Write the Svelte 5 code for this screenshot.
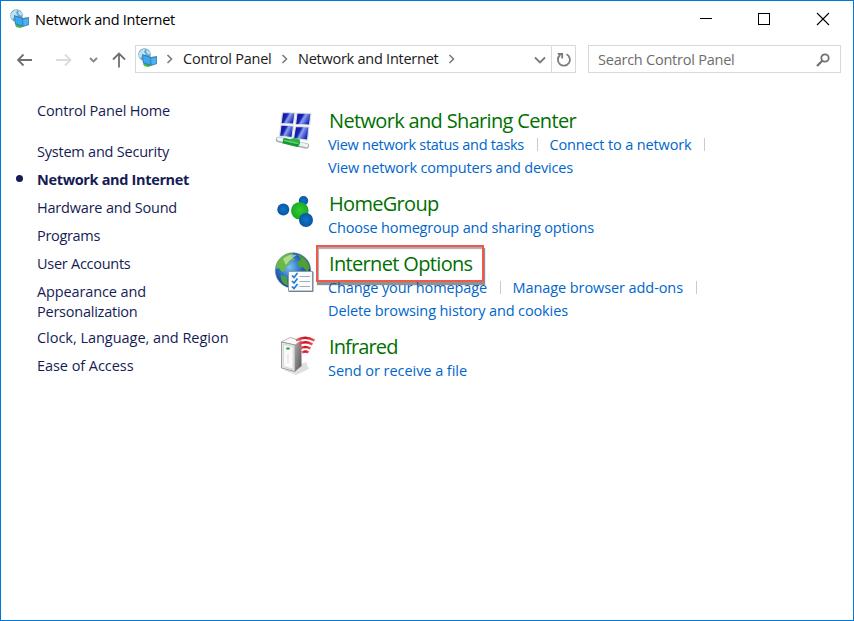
<script>
  // Tightens or loosens a label's tracking so that it fills its measured width.
  function fit(node, width) {
    const range = document.createRange();
    range.selectNodeContents(node);
    const natural = range.getBoundingClientRect().width;
    node.style.letterSpacing = `${(width - natural) / node.textContent.trim().length}px`;
  }

  const sidebar = [
    { lines: [['System and Security', 132]] },
    { lines: [['Network and Internet', 152]], current: true },
    { lines: [['Hardware and Sound', 140]] },
    { lines: [['Programs', 63]] },
    { lines: [['User Accounts', 93.5]] },
    { lines: [['Appearance and', 109], ['Personalization', 100.5]] },
    { lines: [['Clock, Language, and Region', 191.5]] },
    { lines: [['Ease of Access', 96.5]] },
  ];

  const groups = [
    {
      icon: 'center', title: ['Network and Sharing Center', 247],
      rows: [
        [['View network status and tasks', 196], ['Connect to a network', 142]],
        [['View network computers and devices', 245]],
      ],
      trailing: true,
    },
    { icon: 'home', title: ['HomeGroup', 109.5], rows: [[['Choose homegroup and sharing options', 266]]] },
    {
      icon: 'globe', title: ['Internet Options', 143.5], marked: true,
      rows: [
        [['Change your homepage', 159], ['Manage browser add-ons', 170.5]],
        [['Delete browsing history and cookies', 240]],
      ],
      trailing: true,
    },
    { icon: 'infrared', title: ['Infrared', 68.5], rows: [[['Send or receive a file', 139]]] },
  ];
</script>

{#snippet netIcon()}
  <svg class="net" width="20" height="20" viewBox="0 0 20 20">
    <circle cx="6.5" cy="6.5" r="6.3" fill="#62a6cc" />
    <path d="M1 5Q3.5 .8 7.5 .8L6 4L8 6.5L4.5 7.5L2.5 10.5Q-.5 8 1 5M8.5 1L12 4L11.5 7L8.5 5Z" fill="#bfe0ee" />
    <path d="M5 16L9 15.5L13.5 17.5L10.5 19L6.5 18.3Z" fill="#42bd3f" />
    <path d="M11 9.2L19 8V16L13 18Z" fill="#4a83a8" />
    <path d="M13 10.6L18.2 9.4V15.2L13.6 16.7Z" fill="#47b4f8" />
    <path d="M4 6L13 9V17.8L5 15.5Z" fill="#3f7ca4" />
    <path d="M5 7.4L12.2 9.8V16.6L5.8 14.6Z" fill="#38a9f5" />
  </svg>
{/snippet}

{#snippet chevron()}
  <svg class="chev" width="8" height="10" viewBox="0 0 8 10"><path d="M1.5 1L5.5 5L1.5 9" /></svg>
{/snippet}

{#snippet groupIcon(kind)}
  <svg width="42" height="44" viewBox="0 0 42 44">
    <defs>
      <linearGradient id="screen" x1="0" y1="0" x2="1" y2=".45">
        <stop offset="0" stop-color="#0b129c" /><stop offset=".45" stop-color="#1622b5" />
        <stop offset=".6" stop-color="#8ca0ee" /><stop offset="1" stop-color="#1225b4" />
      </linearGradient>
      <radialGradient id="blue"><stop offset="0" stop-color="#1273c6" /><stop offset="1" stop-color="#0757a4" /></radialGradient>
      <radialGradient id="green" cx=".5" cy=".45"><stop offset="0" stop-color="#34c936" /><stop offset="1" stop-color="#18aa20" /></radialGradient>
      <radialGradient id="sea" cx=".4" cy=".4" r=".62">
        <stop offset="0" stop-color="#7cc4f6" /><stop offset=".5" stop-color="#2c70c8" /><stop offset="1" stop-color="#152d78" />
      </radialGradient>
      <linearGradient id="side" x1="0" y1="0" x2="1" y2="1">
        <stop offset="0" stop-color="#aaa" /><stop offset="1" stop-color="#555" />
      </linearGradient>
      <linearGradient id="wave" x1="0" y1="0" x2="1" y2="0">
        <stop offset="0" stop-color="#ee6570" /><stop offset=".5" stop-color="#c40f22" /><stop offset="1" stop-color="#ef5a59" />
      </linearGradient>
    </defs>
    {#if kind === 'center'}
      <g stroke="#dcdee3" stroke-width="1.2" fill="url(#screen)">
        <path d="M8.5 4.5L21 5L19.5 16L7 15.5Z" /><path d="M23 5L37 5.5L35.5 17L21.5 16.5Z" />
        <path d="M7 17L19.5 18L18 29.5L5.5 28Z" /><path d="M21.5 18.5L35 19L33.5 32L19.5 30.5Z" />
      </g>
      <path d="M4.5 31.5L32.5 38" stroke="#a5b0b3" stroke-width="5.4" stroke-linecap="round" />
      <path d="M4.5 31L32.5 37.5" stroke="#edf2f2" stroke-width="3.4" stroke-linecap="round" />
      <path d="M9 32.5L25 36.5" stroke="#159832" stroke-width="5.5" />
      <path d="M15 32Q21 28 26 32L26 36.5L15 34.5Z" fill="#2db447" />
      <path d="M10 32.3L24 35.6" stroke="#60cf73" stroke-width="1.4" />
    {:else if kind === 'home'}
      <circle cx="29.5" cy="9.8" r="4.7" fill="url(#blue)" />
      <circle cx="9.3" cy="18.5" r="6" fill="url(#blue)" />
      <circle cx="25.8" cy="19.8" r="8.8" fill="url(#green)" />
      <circle cx="32" cy="29" r="7" fill="url(#blue)" />
    {:else if kind === 'globe'}
      <circle cx="19" cy="19.5" r="17.7" fill="url(#sea)" stroke="#6c8baa" stroke-width=".6" />
      <path d="M4 10Q10 2 19 2L17 6L21 8L18 10L15 10L16 13L11 16L12 19L8 21L5 17L2 18Q2 13 4 10Z" fill="#69b943" />
      <path d="M23 3Q33 6 36 17L33 21L29 16L26 17L23 12L27 8Z" fill="#4f9f35" />
      <path d="M7 24L13 26L14 35L10 33Q6 29 7 24Z" fill="#4c9f42" />
      <path d="M9 8Q15 2 23 4Q16 8 12 14Z" fill="#d4edbb" opacity=".65" />
      <rect x="14.5" y="20.5" width="24" height="19.5" fill="#fafbfd" stroke="#919ba8" />
      <path d="M15 40.5H39V21" stroke="#777f88" fill="none" />
      <path d="M18 24.5L20 26.5L23.5 22M18 30L20 32L23.5 27.5M18 35.5L20 37.5L23.5 33" fill="none" stroke="#1c7fd3" stroke-width="1.7" />
      <path d="M25.5 25.5H36M25.5 30.5H36M25.5 35.5H36" stroke="#a4abb5" />
    {:else}
      <path d="M10 36L22 41L35 35L32 28Z" fill="#ccc" opacity=".6" />
      <path d="M7.5 8L16 3.5L27 6.5L21 11Z" fill="#fafafa" stroke="#999" stroke-width=".7" />
      <path d="M7.5 8L21 11V37.5L7.5 34Z" fill="#e8e8e8" stroke="#888" stroke-width=".8" />
      <path d="M9.5 10.5L19 12.5V35L9.5 32.5Z" fill="#fafafa" stroke="#c4c4c4" stroke-width=".6" />
      <path d="M21 11L27.5 6.5V32L21 37.5Z" fill="url(#side)" />
      <ellipse cx="14" cy="14.5" rx="2" ry="1.3" fill="#40aa48" />
      <path d="M14 20V29" stroke="#ddd" />
      <g fill="none" stroke="url(#wave)" stroke-width="2.5">
        <path d="M22 6.5Q31 1 40.5 6.5" /><path d="M24 10.5Q31.5 6 38.5 10.5" />
        <path d="M26 14.5Q31.5 11.5 36.5 14.5" /><path d="M28 18.5Q31.5 16.5 34.5 18.5" />
      </g>
    {/if}
  </svg>
{/snippet}

<div class="window">
  <header class="titlebar">
    {@render netIcon()}
    <span class="title"><span use:fit={140}>Network and Internet</span></span>
    <svg class="controls" width="138" height="16" viewBox="0 0 138 16" shape-rendering="crispEdges">
      <path d="M7 6.5H19" stroke="#000" />
      <rect x="65.5" y="1.5" width="11" height="11" fill="none" stroke="#000" />
      <path d="M124 1L136 13M136 1L124 13" stroke="#000" shape-rendering="auto" stroke-width="1.1" />
    </svg>
  </header>

  <nav class="toolbar">
    <svg class="arrows" width="118" height="20" viewBox="0 0 118 20" fill="none" stroke-width="1.8">
      <path d="M31 11H17M22.5 5.5L17 11L22.5 16.5" stroke="#707070" />
      <path d="M55 11H69M64 5.5L69.5 11L64 16.5" stroke="#dcdcdc" />
      <path d="M89 9L92.5 12.5L96 9" stroke="#858585" />
      <path d="M118 18.5V5M112 10.5L118 4.5L124 10.5" stroke="#707070" />
    </svg>
    <div class="address">
      {@render netIcon()}
      {@render chevron()}
      <span use:fit={88.5}>Control Panel</span>
      {@render chevron()}
      <span use:fit={140.5}>Network and Internet</span>
      {@render chevron()}
      <svg class="drop" width="12" height="8" viewBox="0 0 12 8"><path d="M1 1.5L6 6.5L11 1.5" fill="none" stroke="#7b7b7b" stroke-width="1.8" /></svg>
      <span class="refresh">
        <svg width="16" height="16" viewBox="0 0 16 16" fill="none" stroke="#7b7b7b" stroke-width="1.8">
          <path d="M10.5 3.3A6 6 0 1 1 4.2 4" /><path d="M1.8 3H6.2V7.5" />
        </svg>
      </span>
    </div>
    <div class="search">
      <span use:fit={136.5}>Search Control Panel</span>
      <svg width="14" height="14" viewBox="0 0 14 14" fill="none" stroke="#707070">
        <circle cx="9" cy="5" r="3.7" stroke-width="1.8" /><path d="M6.3 7.7L1 13" stroke-width="2.2" />
      </svg>
    </div>
  </nav>

  <main>
    <aside>
      <div class="item homelink"><span use:fit={133}>Control Panel Home</span></div>
      {#each sidebar as entry}
        <div class="item" class:current={entry.current} class:double={entry.lines.length > 1}>
          {#each entry.lines as [text, width]}
            <div><span use:fit={width}>{text}</span></div>
          {/each}
        </div>
      {/each}
    </aside>

    <section>
      {#each groups as group}
        <article>
          <div class="icon">{@render groupIcon(group.icon)}</div>
          <div>
            <h2 class:marked={group.marked}><span use:fit={group.title[1]}>{group.title[0]}</span></h2>
            {#each group.rows as row, i}
              <div class="links">
                {#each row as [text, width]}
                  <a class:divided={group.trailing && i === 0} href="#top" style:width="{width}px"><span use:fit={width}>{text}</span></a>
                {/each}
              </div>
            {/each}
          </div>
        </article>
      {/each}
    </section>
  </main>
</div>

<style>
  :global(body) { margin: 0; background: #fff; }
  .window {
    box-sizing: border-box; width: 854px; height: 621px; overflow: hidden;
    border: 1px solid #0078d7; background: #fff; color: #000;
    font: 14.5px/20px "Open Sans", "Noto Sans", sans-serif;
  }
  span, a { white-space: nowrap; }
  svg { display: block; flex: none; }
  .titlebar { display: flex; height: 37px; align-items: center; padding-left: 9px; }
  .titlebar .net { margin-top: -1px; }
  .title { margin-left: 5px; flex: 1; }
  .controls { margin-right: 22px; }
  .toolbar { display: flex; height: 28px; margin-top: 7px; align-items: center; color: #1a1a1a; }
  .arrows { overflow: visible; margin-right: 16px; }
  .address, .search {
    box-sizing: border-box; height: 28px; border: 1px solid #d9d9d9;
    display: flex; align-items: center;
  }
  .address { width: 441px; padding-left: 2px; }
  .address .net { margin-top: -2px; }
  .chev { margin-left: 8px; margin-right: 9px; }
  span + .chev { margin-left: 9.5px; }
  .chev path { fill: none; stroke: #7b7b7b; stroke-width: 1.6; }
  .drop { margin: 2px 5px 0 auto; }
  .refresh { width: 23px; height: 26px; border-left: 1px solid #d9d9d9; display: grid; place-items: center; }
  .search { width: 253px; margin-left: 12px; padding: 1px 10px 0 9px; justify-content: space-between; color: #6d6d6d; }
  main { display: flex; }
  aside { box-sizing: border-box; width: 273px; padding: 28px 0 0 36px; color: #151c55; }
  .item { margin-bottom: 8px; position: relative; }
  .homelink { margin-bottom: 21px; }
  .double { margin-bottom: 6px; }
  .current { font-weight: 700; }
  .current::before {
    content: ""; position: absolute; left: -21px; top: 5px;
    width: 7px; height: 7px; border-radius: 50%; background: #151c55;
  }
  section { padding-top: 35px; }
  article { display: flex; margin-bottom: 12px; }
  .icon { width: 54px; }
  .icon svg { margin-bottom: -8px; }
  h2 {
    position: relative; margin: 0 0 -1px; padding-left: 1px; font-size: 20px;
    font-weight: 400; line-height: 26px; color: #007000;
  }
  .marked::after {
    content: ""; position: absolute; left: -12px; top: -6px; width: 164px; height: 33px;
    border: 2px solid #f0584b; box-shadow: 1px 3px 1px rgba(70, 70, 70, .6), inset 1px 2px 1px rgba(70, 70, 70, .45);
  }
  .links { display: flex; height: 23px; line-height: 23px; }
  a { color: #0066cc; text-decoration: none; }
  .divided {
    padding-right: 13.5px; margin-right: 12px;
    background: linear-gradient(#ccc, #ccc) right 5px / 1px 13px no-repeat;
  }
</style>
